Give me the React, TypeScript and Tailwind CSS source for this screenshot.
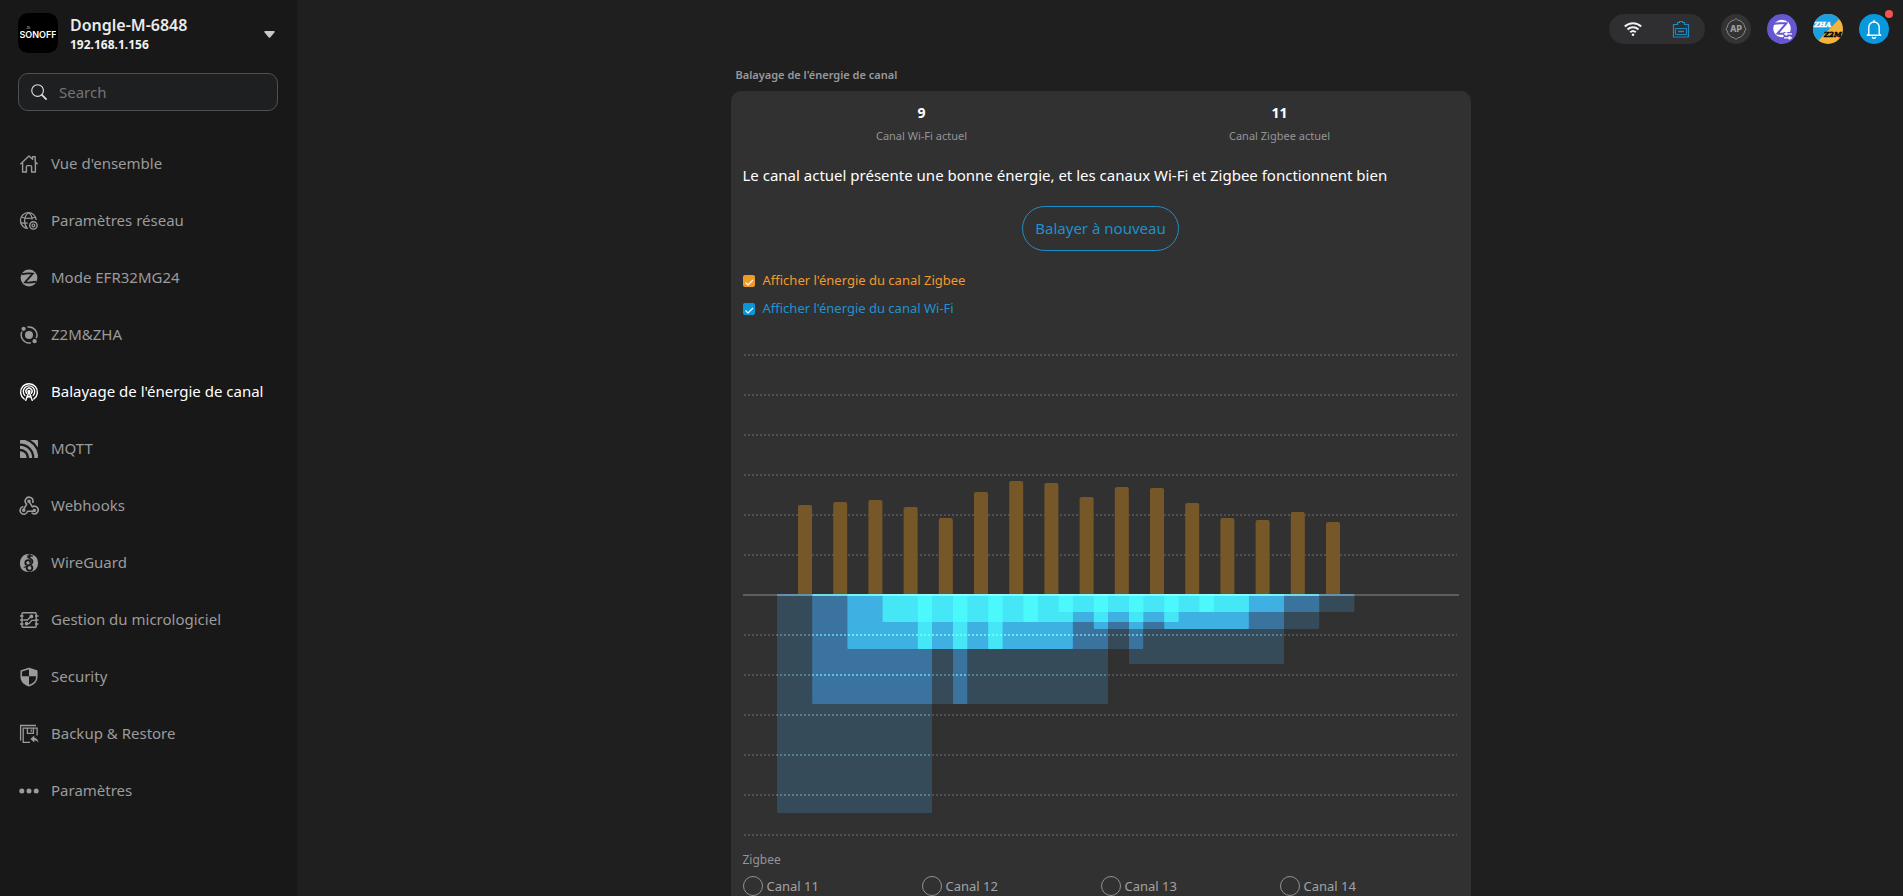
import React, { useState } from 'react';
import { SiWireguard } from 'react-icons/si';

const iconClass = 'w-5 h-5 shrink-0';

const HomeIcon = () => (
  <svg className={iconClass} viewBox="0 0 20 20" fill="none" stroke="currentColor" strokeWidth="1.4" strokeLinejoin="round" strokeLinecap="round">
    <path d="M1.8 9.8 10 2l3.6 3.3V2.6h2.6v5.2l2 2" />
    <path d="M3.6 9v9h3.8v-5.4a1 1 0 0 1 1-1h3.2a1 1 0 0 1 1 1V18h3.8V9" />
  </svg>
);

const NetworkIcon = () => (
  <svg className={iconClass} viewBox="0 0 20 20" fill="none" stroke="currentColor" strokeWidth="1.2">
    <path d="M9 17.4A7.9 7.9 0 1 1 17.2 9" />
    <path d="M9.4 1.6C4.6 5.6 4.6 13 8 17M9.4 1.6c2.4 1.8 3.6 4.4 3.8 7M2.4 6.2c4.4 1.4 9.6 1.4 14 0M1.6 11.600c2.2.5 4.600.6 7 .5" />
    <circle cx="14.4" cy="14.4" r="3.7" strokeWidth="1.4" />
    <circle cx="14.4" cy="14.4" r="1.4" />
  </svg>
);

const ZigbeeIcon = () => (
  <svg className={iconClass} viewBox="0 0 20 20">
    <circle cx="10" cy="10" r="8.4" fill="currentColor" />
    <path d="M2.600 6.300c3.600-.8 7.400-1 11.200-.7L6 14.400c3.800.3 7.600.1 11.400-.7" fill="none" stroke="#181818" strokeWidth="1.700" />
  </svg>
);

const OrbitIcon = () => (
  <svg className={iconClass} viewBox="0 0 20 20" fill="none" stroke="currentColor" strokeWidth="1.5">
    <circle cx="10" cy="10" r="4" fill="currentColor" stroke="none" />
    <path d="M8.4 2.1a8 8 0 0 1 8.8 11.2M11.8 17.8A8 8 0 0 1 3 6.5" />
    <circle cx="4.6" cy="3.8" r="2.1" fill="currentColor" stroke="none" />
    <circle cx="15.6" cy="16.2" r="2.1" fill="currentColor" stroke="none" />
  </svg>
);

const ScanIcon = () => (
  <svg className={iconClass} viewBox="0 0 20 20" fill="none" stroke="currentColor" strokeWidth="1.4" strokeLinecap="round">
    <path d="M5.2 17A8.4 8.4 0 1 1 14.8 17" />
    <path d="M5.8 13.4a5.7 5.7 0 1 1 8.4 0" />
    <path d="M7.6 11.3a3.1 3.1 0 1 1 4.8 0" />
    <circle cx="10" cy="9.4" r="1" fill="currentColor" />
    <path d="m9.6 10.8-2.9 7.6M10.4 10.8l2.9 7.6M8 15.4l4-1.4M12.2 15.4 8 14" />
  </svg>
);

const MqttIcon = () => (
  <svg className={iconClass} viewBox="0 0 20 20" fill="currentColor">
    <path d="M1 12.2A6.8 6.8 0 0 1 7.8 19H2a1 1 0 0 1-1-1z" />
    <path d="M1 6.8v3A9.2 9.2 0 0 1 10.2 19h3A12.2 12.2 0 0 0 1 6.8z" />
    <path d="M1 2v2.6A14.4 14.4 0 0 1 15.4 19H18a1 1 0 0 0 1-1v-2A18 18 0 0 0 6 1H2a1 1 0 0 0-1 1z" />
    <path d="M11.5 1A19 19 0 0 1 19 8.6V2a1 1 0 0 0-1-1z" />
  </svg>
);

const WebhookIcon = () => (
  <svg className={iconClass} viewBox="0 0 20 20" fill="none" stroke="currentColor" strokeWidth="1.6" strokeLinecap="round" strokeLinejoin="round">
    <path d="M13.8 6.3a3.9 3.9 0 1 0-6.1 1.9L4.9 13" />
    <path d="m10 5.3 3.3 5.5a3.8 3.8 0 1 1-.2 6.3" />
    <path d="M3.7 10.8a3.8 3.8 0 1 0 4.9 4.4h6.3" />
    <circle cx="10" cy="5.3" r="1" fill="currentColor" />
    <circle cx="4.7" cy="14.3" r="1" fill="currentColor" />
    <circle cx="15.3" cy="14.5" r="1" fill="currentColor" />
  </svg>
);

const WireguardIcon = () => (
  <span className={`${iconClass} p-px`}>
    <SiWireguard className="w-full h-full" />
  </span>
);

const FirmwareIcon = () => (
  <svg className={iconClass} viewBox="0 0 20 20" fill="none" stroke="currentColor" strokeWidth="1.4">
    <rect x="3" y="2.7" width="14.2" height="14.6" rx="1" />
    <path d="M1 6h3.5M1 10h3.5M1 14h3.5M16 6h3.5M16 10h3.5M16 14h3.5" />
    <path d="M4.5 10h3.8l3.2-3M8 13.6h2l2.8-3.2H16" />
    <circle cx="12.4" cy="6.4" r="1.2" fill="currentColor" />
    <circle cx="7.6" cy="13.6" r="1.2" fill="currentColor" />
  </svg>
);

const SecurityIcon = () => (
  <svg className={iconClass} viewBox="0 0 20 20">
    <path d="M10 1.500 17.800 4v6c0 4.300-3.500 7.200-7.800 8.800C5.700 17.200 2.200 14.300 2.200 10V4z" fill="none" stroke="currentColor" strokeWidth="1.500" strokeLinejoin="round" />
    <path d="M10 1.500 17.800 4v5.300H10zM10 9.300v9.500C5.700 17.200 2.200 14.300 2.200 10v-.7z" fill="currentColor" />
  </svg>
);

const BackupIcon = () => (
  <svg className={iconClass} viewBox="0 0 20 20" fill="none" stroke="currentColor" strokeWidth="1.3">
    <path d="M1.6 16.5v-15H17" />
    <path d="M11 18.3H4.2V4.2h13.900v7.300" />
    <path d="M8.4 4.2v5.200h6V4.200M12.200 5.400v2.400" />
    <path d="m11.400 15 3.900-3.400v2.200c2.300.2 3.700 1.900 4.200 5-1.100-1.600-2.400-2.200-4.200-2.200v1.900z" fill="currentColor" stroke="none" />
  </svg>
);

const DotsIcon = () => (
  <svg className={iconClass} viewBox="0 0 20 20" fill="currentColor">
    <circle cx="2.8" cy="10" r="2.500" />
    <circle cx="10" cy="10" r="2.500" />
    <circle cx="17.200" cy="10" r="2.500" />
  </svg>
);

const menuItems = [
  { label: "Vue d'ensemble", icon: <HomeIcon /> },
  { label: 'Paramètres réseau', icon: <NetworkIcon /> },
  { label: 'Mode EFR32MG24', icon: <ZigbeeIcon /> },
  { label: 'Z2M&ZHA', icon: <OrbitIcon /> },
  { label: "Balayage de l'énergie de canal", icon: <ScanIcon />, active: true },
  { label: 'MQTT', icon: <MqttIcon /> },
  { label: 'Webhooks', icon: <WebhookIcon /> },
  { label: 'WireGuard', icon: <WireguardIcon /> },
  { label: 'Gestion du micrologiciel', icon: <FirmwareIcon /> },
  { label: 'Security', icon: <SecurityIcon /> },
  { label: 'Backup & Restore', icon: <BackupIcon /> },
  { label: 'Paramètres', icon: <DotsIcon /> },
];

const Sidebar = () => (
  <aside className="w-[298px] shrink-0 bg-[#181818] border-r border-[#1c1c1c] px-[18px] pt-[13px]">
    <button type="button" className="w-full flex items-start text-left">
      <span className="w-10 h-10 rounded-[10px] bg-black flex items-center justify-center">
        <svg className="w-9 h-4" viewBox="0 0 36 16" aria-label="SONOFF">
          <path d="M6.5 3.5a3 3 0 0 1 3 0M7 1.5a4 4 0 0 1 3.5 1.5" fill="none" stroke="#aaa" strokeWidth=".7" />
          <text x="18" y="12.5" textAnchor="middle" fontSize="9" fontWeight="600" fill="#fff" fontFamily="Inter, sans-serif">SONOFF</text>
        </svg>
      </span>
      <span className="flex-1 ml-3 pt-0.5">
        <span className="block text-base leading-5 font-semibold text-[#eaeaea]">Dongle-M-6848</span>
        <span className="block text-xs leading-5 font-bold text-[#f2f2f2]">192.168.1.156</span>
      </span>
      <svg className="w-[11px] h-[7px] mr-1 self-center" viewBox="0 0 11 7" fill="#c8c8c8">
        <path d="M1 0h9a.8.8 0 0 1 .6 1.3L6.2 6.5a1 1 0 0 1-1.4 0L.4 1.3A.8.8 0 0 1 1 0z" />
      </svg>
    </button>

    <label className="mt-[18px] h-[38px] mr-px flex items-center gap-3 px-3 rounded-[10px] border border-[#4d5152] bg-[#1d1f20]">
      <svg className="w-4 h-4" viewBox="0 0 17 17" fill="none" stroke="#e0e0e0" strokeLinecap="round">
        <circle cx="7" cy="7" r="6.2" strokeWidth="1.2" />
        <path d="m11.6 11.6 4.4 4.4" strokeWidth="1.8" />
      </svg>
      <input type="text" aria-label="Search" placeholder="Search" className="flex-1 min-w-0 bg-transparent outline-none text-[15px] text-white placeholder:text-[#757575]" />
    </label>

    <nav className="mt-6 flex flex-col">
      {menuItems.map(item => (
        <a
          key={item.label}
          href="#"
          className={`h-[57px] flex items-center gap-3 pl-px text-[15px] ${item.active ? 'text-white' : 'text-[#9b9b9b]'}`}
        >
          {item.icon}
          <span>{item.label}</span>
        </a>
      ))}
    </nav>
  </aside>
);

const TopBar = () => (
  <header className="flex justify-end items-center gap-4 pt-[14px] pr-[14px]">
    <div className="w-24 h-[30px] rounded-full bg-[#2f2f31] flex items-center justify-between px-[15px]">
      <svg className="w-[18px] h-[18px]" viewBox="0 0 18 18" fill="none" stroke="#f0f0f0" strokeWidth="2" aria-label="Wi-Fi">
        <path d="M.8 6.4a12 12 0 0 1 16.4 0M3.5 9.4a8 8 0 0 1 11 0M6.2 12.2a4.200 4.200 0 0 1 5.600 0" />
        <circle cx="9" cy="14.7" r="1.300" fill="#f0f0f0" stroke="none" />
      </svg>
      <svg className="w-[18px] h-[18px]" viewBox="0 0 18 18" fill="none" stroke="#1e88c0" aria-label="Ethernet">
        <path d="M1.500 17V4.500h4v-2h2v-1h3v1h2v2h4V17z" strokeWidth="1.200" />
        <path d="M3.500 14.500v-6h11v6z" />
        <path d="M6 11.500h6" strokeWidth="1.500" />
      </svg>
    </div>
    <button type="button" aria-label="AP" className="w-[30px] h-[30px] rounded-full bg-[#333334]">
      <svg viewBox="0 0 30 30" fill="none" stroke="#8b8b8b">
        <path d="M8.5 8.5a9.2 9.2 0 0 1 5-2.6L15 4.5l1.5 1.4a9.2 9.2 0 0 1 5 2.6M8.5 21.5a9.2 9.2 0 0 0 5 2.6l1.5 1.4 1.5-1.4a9.2 9.2 0 0 0 5-2.6M8.5 8.5a9.2 9.2 0 0 0-2.3 4.7L5 15l1.2 1.8a9.2 9.2 0 0 0 2.3 4.7M21.5 8.5a9.2 9.2 0 0 1 2.3 4.7L25 15l-1.2 1.8a9.2 9.2 0 0 1-2.3 4.7" />
        <text x="15" y="18" textAnchor="middle" fontSize="8.500" fontWeight="800" fill="#a0a0a0" stroke="none" fontFamily="Inter, sans-serif">AP</text>
      </svg>
    </button>
    <button type="button" aria-label="Zigbee" className="w-[30px] h-[30px] rounded-full bg-[#6556d2]">
      <svg viewBox="0 0 30 30">
        <circle cx="15" cy="14.5" r="8.8" fill="#fff" />
        <path d="M6 10c4.600-.9 9-1 13.300-.7L10.500 19.500c2.600.4 5.200.4 8 0" fill="none" stroke="#6556d2" strokeWidth="2" />
        <path d="M16.500 18h8.500v8h-8.500z" fill="#6556d2" />
        <path d="M17 19.8h8M17 23.8h8" stroke="#fff" strokeWidth="1.3" />
        <path d="M19.3 18.2v3.2M22.5 22.2v3.2" stroke="#fff" strokeWidth="2" />
      </svg>
    </button>
    <button type="button" aria-label="ZHA Z2M" className="w-[30px] h-[30px] rounded-full overflow-hidden bg-[#f2b43c]">
      <svg viewBox="0 0 30 30" fontFamily="'DejaVu Serif', serif" fontSize="7" fontWeight="700" fontStyle="italic" strokeWidth=".5">
        <path d="M0 0h30v1L4 28l-4 2z" fill="#1a9fe3" />
        <text x="1" y="13" fill="#fff" stroke="#fff">ZHA</text>
        <text x="11" y="23" fill="#000" stroke="#000">Z2M</text>
      </svg>
    </button>
    <button type="button" aria-label="Notifications" className="relative w-[30px] h-[30px] rounded-full bg-[#0898de]">
      <svg viewBox="0 0 30 30" fill="none" stroke="#fff" strokeWidth="1.4" strokeLinecap="round" strokeLinejoin="round">
        <path d="M15 6.4v1M9.8 19.8v-6.6a5.2 5.200 0 0 1 10.400 0v6.600l1.500 1.500H8.300z" />
        <path d="M13.4 23.4a1.9 1.900 0 0 0 3.200 0" />
      </svg>
      <span className="absolute -top-1 -right-1 w-2 h-2 rounded-full bg-[#f2554d]" />
    </button>
  </header>
);

// Heights in pixels from the middle axis, one value per channel
const zigbeeEnergy = [90, 93, 95, 88, 77, 103, 114, 112, 98, 108, 107, 92, 77, 75, 83, 73];
const wifiEnergy = [218, 109, 54, 27, 54, 109, 54, 27, 17, 34, 69, 34, 17];

const gridLines = [0, 40, 80, 120, 160, 200, 280, 320, 360, 400, 440, 480];
const AXIS = 240;
const STEP = 35.2;

const EnergyChart = ({ showZigbee, showWifi }: { showZigbee: boolean; showWifi: boolean }) => (
  <svg className="block w-full overflow-visible isolate" viewBox="0 0 716 481" role="img" aria-label="Zigbee / Wi-Fi">
    <rect width="716" height="481" fill="#313132" />
    {gridLines.map(y => (
      <line key={y} x1="1" x2="714" y1={y} y2={y} stroke="#4f5152" strokeWidth="2" strokeDasharray="2 2" />
    ))}
    <line x1="0" x2="716" y1={AXIS} y2={AXIS} stroke="#5e5e60" strokeWidth="2" />
    {showZigbee && zigbeeEnergy.map((h, i) => {
      const x = 55 + i * STEP;
      return (
        <path key={i} d={`M${x} ${AXIS - 1}v${-h + 3}q0 -2 2 -2h10q2 0 2 2v${h - 3}z`} fill="#765728" />
      );
    })}
    {showWifi && wifiEnergy.map((h, i) => (
      <rect key={i} x={34 + i * STEP} y={AXIS - 1} width="155" height={h + 1} rx="1" fill="#1d6e86" fillOpacity=".7" className="mix-blend-color-dodge" />
    ))}
  </svg>
);

interface EnergyCheckboxProps {
  label: string;
  checked: boolean;
  onChange: (checked: boolean) => void;
  textClass: string;
  boxClass: string;
}

const EnergyCheckbox: React.FC<EnergyCheckboxProps> = ({ label, checked, onChange, textClass, boxClass }) => (
  <label className={`h-7 flex items-center gap-2 text-[13px] ${textClass}`}>
    <span className="grid w-3 h-3">
      <input
        type="checkbox"
        checked={checked}
        onChange={e => onChange(e.target.checked)}
        className={`col-start-1 row-start-1 w-3 h-3 appearance-none rounded-xs ${boxClass}`}
      />
      {checked && (
        <svg className="col-start-1 row-start-1 w-3 h-3 pointer-events-none" viewBox="0 0 12 12" fill="none" stroke="#fff" strokeWidth="1.1">
          <path d="m2.500 7.500 2.500 2.500L10 5" />
        </svg>
      )}
    </span>
    {label}
  </label>
);

const App = () => {
  const [showZigbee, setShowZigbee] = useState(true);
  const [showWifi, setShowWifi] = useState(true);

  return (
    <div className="h-screen flex overflow-hidden bg-[#1f1f20] text-white font-['Segoe_UI','Noto_Sans',sans-serif]">
      <Sidebar />
      <div className="flex-1 min-w-0 flex flex-col">
        <TopBar />
        <main className="w-full max-w-[740px] mx-auto mt-[21px]">
          <h1 className="pl-[5px] text-[11px] leading-5 font-semibold text-[#98999a]">Balayage de l'énergie de canal</h1>
          <section className="mt-[6px] px-3 pb-6 rounded-[10px] bg-[#313132]">
            <div className="grid grid-cols-2 pt-3 text-center">
              <div>
                <div className="text-sm leading-5 font-bold">9</div>
                <div className="mt-[3px] text-[11px] leading-5 text-[#949596]">Canal Wi-Fi actuel</div>
              </div>
              <div>
                <div className="text-sm leading-5 font-bold">11</div>
                <div className="mt-[3px] text-[11px] leading-5 text-[#949596]">Canal Zigbee actuel</div>
              </div>
            </div>
            <p className="mt-[17px] text-[15px] leading-6">
              Le canal actuel présente une bonne énergie, et les canaux Wi-Fi et Zigbee fonctionnent bien
            </p>
            <div className="mt-[19px] flex justify-center">
              <button type="button" className="h-[45px] px-3 rounded-full border border-[#1b8fc9] text-[15px] text-[#1e90cc]">
                Balayer à nouveau
              </button>
            </div>
            <div className="mt-4">
              <EnergyCheckbox
                label="Afficher l'énergie du canal Zigbee"
                checked={showZigbee}
                onChange={setShowZigbee}
                textClass="text-[#f39a2b]"
                boxClass="bg-[#f09a26]"
              />
              <EnergyCheckbox
                label="Afficher l'énergie du canal Wi-Fi"
                checked={showWifi}
                onChange={setShowWifi}
                textClass="text-[#1f93d0]"
                boxClass="bg-[#0698dd]"
              />
            </div>
            <div className="mt-8">
              <EnergyChart showZigbee={showZigbee} showWifi={showWifi} />
            </div>
            <fieldset className="mt-[14px]">
              <legend className="text-xs leading-5 text-[#949596]">Zigbee</legend>
              <div className="mt-[6px] grid grid-cols-4">
                {[11, 12, 13, 14].map(channel => (
                  <label key={channel} className="flex items-center gap-1 text-[13px] leading-5 text-[#a2a3a4]">
                    <input type="radio" name="zigbee-channel" value={channel} className="w-5 h-5 appearance-none rounded-full border border-[#909192]" />
                    Canal {channel}
                  </label>
                ))}
              </div>
            </fieldset>
          </section>
        </main>
      </div>
    </div>
  );
};

export default App;
